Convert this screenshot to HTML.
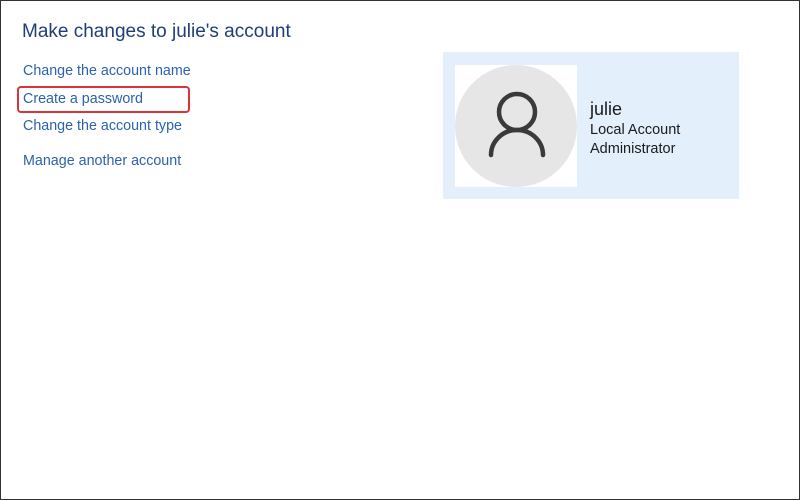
<!DOCTYPE html>
<html><head><style>
body{margin:0;width:800px;height:500px;overflow:hidden;background:#fff;font-family:"Liberation Sans",sans-serif;}
.frame{position:absolute;left:0;top:0;width:798px;height:498px;border:1px solid #333;}
.h{position:absolute;left:22px;top:21px;font-size:19px;color:#1f3e79;}
.l{position:absolute;left:23px;font-size:14.3px;color:#2c62ad;white-space:nowrap;}
.red{position:absolute;left:17px;top:86px;width:169px;height:23px;border:2.5px solid #d9343a;border-radius:4px;}
.box{position:absolute;left:443px;top:52px;width:296px;height:147px;background:#e3f0fc;}
.sq{position:absolute;left:455px;top:65px;width:122px;height:122px;background:#fff;}
.t{position:absolute;left:590px;color:#1a1a1a;white-space:nowrap;}
</style></head><body>
<div class="frame"></div>
<div class="h">Make changes to julie's account</div>
<div class="l" style="top:63px">Change the account name</div>
<div class="l" style="top:91px">Create a password</div>
<div class="red"></div>
<div class="l" style="top:118px">Change the account type</div>
<div class="l" style="top:153px">Manage another account</div>
<div class="box"></div>
<div class="sq"></div>
<svg style="position:absolute;left:455px;top:65px" width="122" height="122">
<circle cx="61" cy="61" r="61" fill="#e6e6e6"/>
<circle cx="62" cy="47" r="18" fill="none" stroke="#3a3a3a" stroke-width="4.5"/>
<path d="M36 90 A26 25 0 0 1 88 90" fill="none" stroke="#3a3a3a" stroke-width="4.5" stroke-linecap="round"/>
</svg>
<div class="t" style="top:99px;font-size:18px">julie</div>
<div class="t" style="top:122px;font-size:14.5px">Local Account</div>
<div class="t" style="top:141px;font-size:14.5px">Administrator</div>
</body></html>
